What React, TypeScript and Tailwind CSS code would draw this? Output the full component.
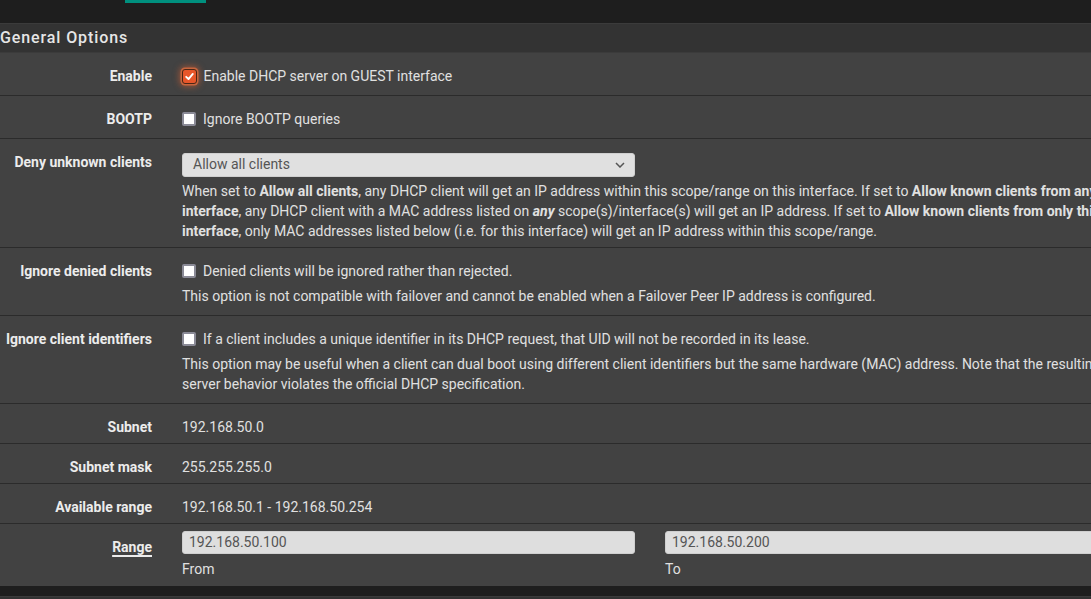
import React from "react";

const Checkbox = ({ checked }: { checked?: boolean }) =>
  checked ? (
    <span className="inline-flex w-[15px] h-[15px] shrink-0 items-center justify-center rounded-[3px] bg-[#e8562a] border border-[#4a2616] shadow-[0_0_0_1.5px_#c8653d,0_0_6px_2.5px_rgba(230,100,50,0.55)] -ml-[0.5px]">
      <svg width="11" height="11" viewBox="0 0 10 10">
        <path d="M2 5.3 L4.1 7.3 L8 2.7" stroke="white" strokeWidth="1.7" fill="none" strokeLinecap="round" strokeLinejoin="round" />
      </svg>
    </span>
  ) : (
    <span className="inline-block w-[14px] h-[14px] shrink-0 rounded-[2px] bg-white border-2 border-[#8a8a96]" />
  );

const Label = ({ children, pt }: { children: React.ReactNode; pt: string }) => (
  <div className={`w-[167px] shrink-0 pr-[15px] text-right font-bold text-[#ececec] ${pt}`}>{children}</div>
);

export default function App() {
  return (
    <div
      className="w-[1091px] h-[599px] overflow-hidden bg-[#1e1e1e] text-[14px] leading-[20px] text-[#e0e0e0]"
      style={{ fontFamily: 'Roboto, "Liberation Sans", sans-serif' }}
    >
      <div className="h-[23px]">
        <div className="ml-[125px] w-[81px] h-[3px] bg-[#00907e]" />
      </div>
      <div className="w-[1300px]">
        <div className="h-[30px] bg-[#333333] border-t border-[#3b3b3b] border-b border-[#2a2a2a] flex items-center text-[16px] font-medium tracking-[0.9px] text-[#e6e6e6]">
          General Options
        </div>
        <div className="bg-[#424242]">
          {/* Enable */}
          <div className="flex h-[43px] border-b border-[#2b2b2b]">
            <Label pt="pt-[13px]">Enable</Label>
            <div className="pl-[15px] pt-[13px]">
              <div className="flex h-[20px] items-center gap-[7px]">
                <Checkbox checked />
                <span>Enable DHCP server on GUEST interface</span>
              </div>
            </div>
          </div>
          {/* BOOTP */}
          <div className="flex h-[43px] border-b border-[#2b2b2b]">
            <Label pt="pt-[13px]">BOOTP</Label>
            <div className="pl-[15px] pt-[13px]">
              <div className="flex h-[20px] items-center gap-[7px]">
                <Checkbox />
                <span>Ignore BOOTP queries</span>
              </div>
            </div>
          </div>
          {/* Deny unknown */}
          <div className="flex h-[109px] border-b border-[#2b2b2b]">
            <Label pt="pt-[13px]">Deny unknown clients</Label>
            <div className="pl-[15px] pt-[14px]">
              <div className="w-[453px] h-[24px] rounded-[3px] bg-[#e0e0e0] border border-[#cfcfcf] flex items-center justify-between pl-[10px] pr-[9px] text-[#555555]">
                <span className="-mt-[2px]">Allow all clients</span>
                <svg width="10" height="6" viewBox="0 0 10 6">
                  <path d="M1 1 L5 5 L9 1" stroke="#555" strokeWidth="1.5" fill="none" />
                </svg>
              </div>
              <p className="mt-[4px] whitespace-nowrap">
                When set to <b>Allow all clients</b>, any DHCP client will get an IP address within this scope/range on this interface. If set to <b>Allow known clients from any</b>
                <br />
                <b>interface</b>, any DHCP client with a MAC address listed on <b><i>any</i></b> scope(s)/interface(s) will get an IP address. If set to <b>Allow known clients from only this</b>
                <br />
                <b>interface</b>, only MAC addresses listed below (i.e. for this interface) will get an IP address within this scope/range.
              </p>
            </div>
          </div>
          {/* Ignore denied */}
          <div className="flex h-[68px] border-b border-[#2b2b2b]">
            <Label pt="pt-[13px]">Ignore denied clients</Label>
            <div className="pl-[15px] pt-[13px]">
              <div className="flex h-[20px] items-center gap-[7px]">
                <Checkbox />
                <span>Denied clients will be ignored rather than rejected.</span>
              </div>
              <p className="mt-[5px] whitespace-nowrap">
                This option is not compatible with failover and cannot be enabled when a Failover Peer IP address is configured.
              </p>
            </div>
          </div>
          {/* Ignore client identifiers */}
          <div className="flex h-[88px] border-b border-[#2b2b2b]">
            <Label pt="pt-[13px]">Ignore client identifiers</Label>
            <div className="pl-[15px] pt-[13px]">
              <div className="flex h-[20px] items-center gap-[7px]">
                <Checkbox />
                <span>If a client includes a unique identifier in its DHCP request, that UID will not be recorded in its lease.</span>
              </div>
              <p className="mt-[5px] whitespace-nowrap">
                This option may be useful when a client can dual boot using different client identifiers but the same hardware (MAC) address. Note that the resulting
                <br />
                server behavior violates the official DHCP specification.
              </p>
            </div>
          </div>
          {/* Subnet */}
          <div className="flex h-[40px] border-b border-[#2b2b2b]">
            <Label pt="pt-[13px]">Subnet</Label>
            <div className="pl-[15px] pt-[13px]">192.168.50.0</div>
          </div>
          <div className="flex h-[40px] border-b border-[#2b2b2b]">
            <Label pt="pt-[13px]">Subnet mask</Label>
            <div className="pl-[15px] pt-[13px]">255.255.255.0</div>
          </div>
          <div className="flex h-[40px] border-b border-[#2b2b2b]">
            <Label pt="pt-[13px]">Available range</Label>
            <div className="pl-[15px] pt-[13px]">192.168.50.1 - 192.168.50.254</div>
          </div>
          {/* Range */}
          <div className="flex h-[62px]">
            <Label pt="pt-[13px]">
              <span className="underline decoration-[1.5px] underline-offset-[3px]">Range</span>
            </Label>
            <div className="flex">
              <div className="w-[483px] px-[15px] pt-[7px]">
                <div className="h-[23px] rounded-[3px] bg-[#dedede] border border-[#cfcfcf] pl-[6px] flex items-center text-[#555555]">
                  <span className="-mt-[2px]">192.168.50.100</span>
                </div>
                <div className="mt-[5px]">From</div>
              </div>
              <div className="w-[483px] px-[15px] pt-[7px]">
                <div className="h-[23px] rounded-[3px] bg-[#dedede] border border-[#cfcfcf] pl-[6px] flex items-center text-[#555555]">
                  <span className="-mt-[2px]">192.168.50.200</span>
                </div>
                <div className="mt-[5px]">To</div>
              </div>
            </div>
          </div>
        </div>
        <div className="h-[10px] bg-[#1e1e1e]" />
        <div className="h-[30px] bg-[#333333] border-t border-[#3b3b3b]" />
      </div>
    </div>
  );
}
